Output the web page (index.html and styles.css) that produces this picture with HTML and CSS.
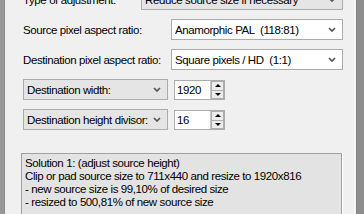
FILE: index.html
```html
<!DOCTYPE html>
<html lang="en">
<head>
    <meta charset="UTF-8">
    <title>Aspect ratio</title>
    <link rel="stylesheet" href="styles.css">
</head>
<body>
    <div class="window">
        <div class="edge-left"></div>
        <div class="panel">
            <div class="row">
                <span class="label">Type of adjustment:</span>
                <div class="combo combo-list combo-wide">
                    <span class="value">Reduce source size if necessary</span>
                    <svg class="arrow" width="8" height="5" viewBox="0 0 8 5"><path d="M1 1 L4 4 L7 1" /></svg>
                </div>
            </div>
            <div class="row">
                <span class="label">Source pixel aspect ratio:</span>
                <div class="combo combo-edit">
                    <span class="value">Anamorphic PAL  (118:81)</span>
                    <svg class="arrow" width="8" height="5" viewBox="0 0 8 5"><path d="M1 1 L4 4 L7 1" /></svg>
                </div>
            </div>
            <div class="row">
                <span class="label">Destination pixel aspect ratio:</span>
                <div class="combo combo-edit">
                    <span class="value">Square pixels / HD  (1:1)</span>
                    <svg class="arrow" width="8" height="5" viewBox="0 0 8 5"><path d="M1 1 L4 4 L7 1" /></svg>
                </div>
            </div>
            <div class="row row-num">
                <div class="combo combo-list combo-short">
                    <span class="value">Destination width:</span>
                    <svg class="arrow" width="8" height="5" viewBox="0 0 8 5"><path d="M1 1 L4 4 L7 1" /></svg>
                </div>
                <div class="numeric">
                    <span class="value">1920</span>
                    <div class="spin">
                        <div class="spin-btn"><span class="tri-up"></span></div>
                        <div class="spin-btn"><span class="tri-down"></span></div>
                    </div>
                </div>
            </div>
            <div class="row row-num">
                <div class="combo combo-list combo-short">
                    <span class="value">Destination height divisor:</span>
                    <svg class="arrow" width="8" height="5" viewBox="0 0 8 5"><path d="M1 1 L4 4 L7 1" /></svg>
                </div>
                <div class="numeric">
                    <span class="value">16</span>
                    <div class="spin">
                        <div class="spin-btn"><span class="tri-up"></span></div>
                        <div class="spin-btn"><span class="tri-down"></span></div>
                    </div>
                </div>
            </div>
            <div class="result">
                <p>Solution 1: (adjust source height)</p>
                <p>Clip or pad source size to 711x440 and resize to 1920x816</p>
                <p>- new source size is 99,10% of desired size</p>
                <p>- resized to 500,81% of new source size</p>
            </div>
        </div>
        <div class="edge-right"></div>
    </div>
</body>
</html>
```

FILE: styles.css
```css
* {
    margin: 0;
    padding: 0;
    box-sizing: border-box;
}
body {
    font-family: 'Liberation Sans', Arial, sans-serif;
    font-size: 11.5px;
    letter-spacing: -0.4px;
    color: #000;
    background: #f0f0f0;
    width: 364px;
    height: 214px;
    overflow: hidden;
}
.window {
    display: flex;
    height: 214px;
}
.edge-left {
    width: 5px;
    background: #999;
    border-right: 1px solid #8a8a8a;
}
.panel {
    flex: 1;
    padding: 0 11px 0 18px;
    margin-top: -11px;
    display: flex;
    flex-direction: column;
    gap: 9px;
}
.edge-right {
    width: 10px;
    border-left: 2px solid #f7f7f7;
    background: #8e8e8e;
    box-shadow: inset 1px 0 0 #808080;
}
.row {
    display: flex;
    align-items: center;
    height: 21px;
}
.label {
    flex: 1;
}
.combo {
    height: 21px;
    display: flex;
    align-items: center;
    padding: 0 6px 0 3px;
    white-space: pre;
}
.combo .value {
    flex: 1;
    overflow: hidden;
}
.combo-edit {
    width: 172px;
    background: #fff;
    border: 1px solid #ababab;
}
.combo-list {
    background: #e5e5e5;
    border: 1px solid #acacac;
}
.combo-wide {
    width: 202px;
}
.combo-short {
    width: 145px;
}
.arrow path {
    fill: none;
    stroke: #555;
    stroke-width: 1.7;
}
.row-num {
    align-items: flex-start;
}
.numeric {
    margin: 1px 0 0 6px;
    width: 51px;
    height: 20px;
    background: #fff;
    border: 1px solid #acacac;
    display: flex;
    align-items: center;
    padding-left: 2px;
}
.numeric .value {
    flex: 1;
}
.spin {
    width: 14px;
    height: 18px;
    display: flex;
    flex-direction: column;
    border-left: 1px solid #c8c8c8;
}
.spin-btn {
    flex: 1;
    display: flex;
    align-items: center;
    justify-content: center;
    background: #ececec;
    border: 1px solid #adadad;
}
.spin-btn + .spin-btn {
    border-top: none;
}
.tri-up {
    border-left: 3px solid transparent;
    border-right: 3px solid transparent;
    border-bottom: 3px solid #000;
}
.tri-down {
    border-left: 3px solid transparent;
    border-right: 3px solid transparent;
    border-top: 3px solid #000;
}
.result {
    margin: 14px 0 0 -2px;
    width: 321px;
    flex: 1;
    background: #e3e3e3;
    border: 1px solid #a0a0a0;
    border-bottom: none;
    box-shadow: 1px 0 0 #fff;
    padding: 3px 3px 0;
    line-height: 13px;
    white-space: nowrap;
}
```
